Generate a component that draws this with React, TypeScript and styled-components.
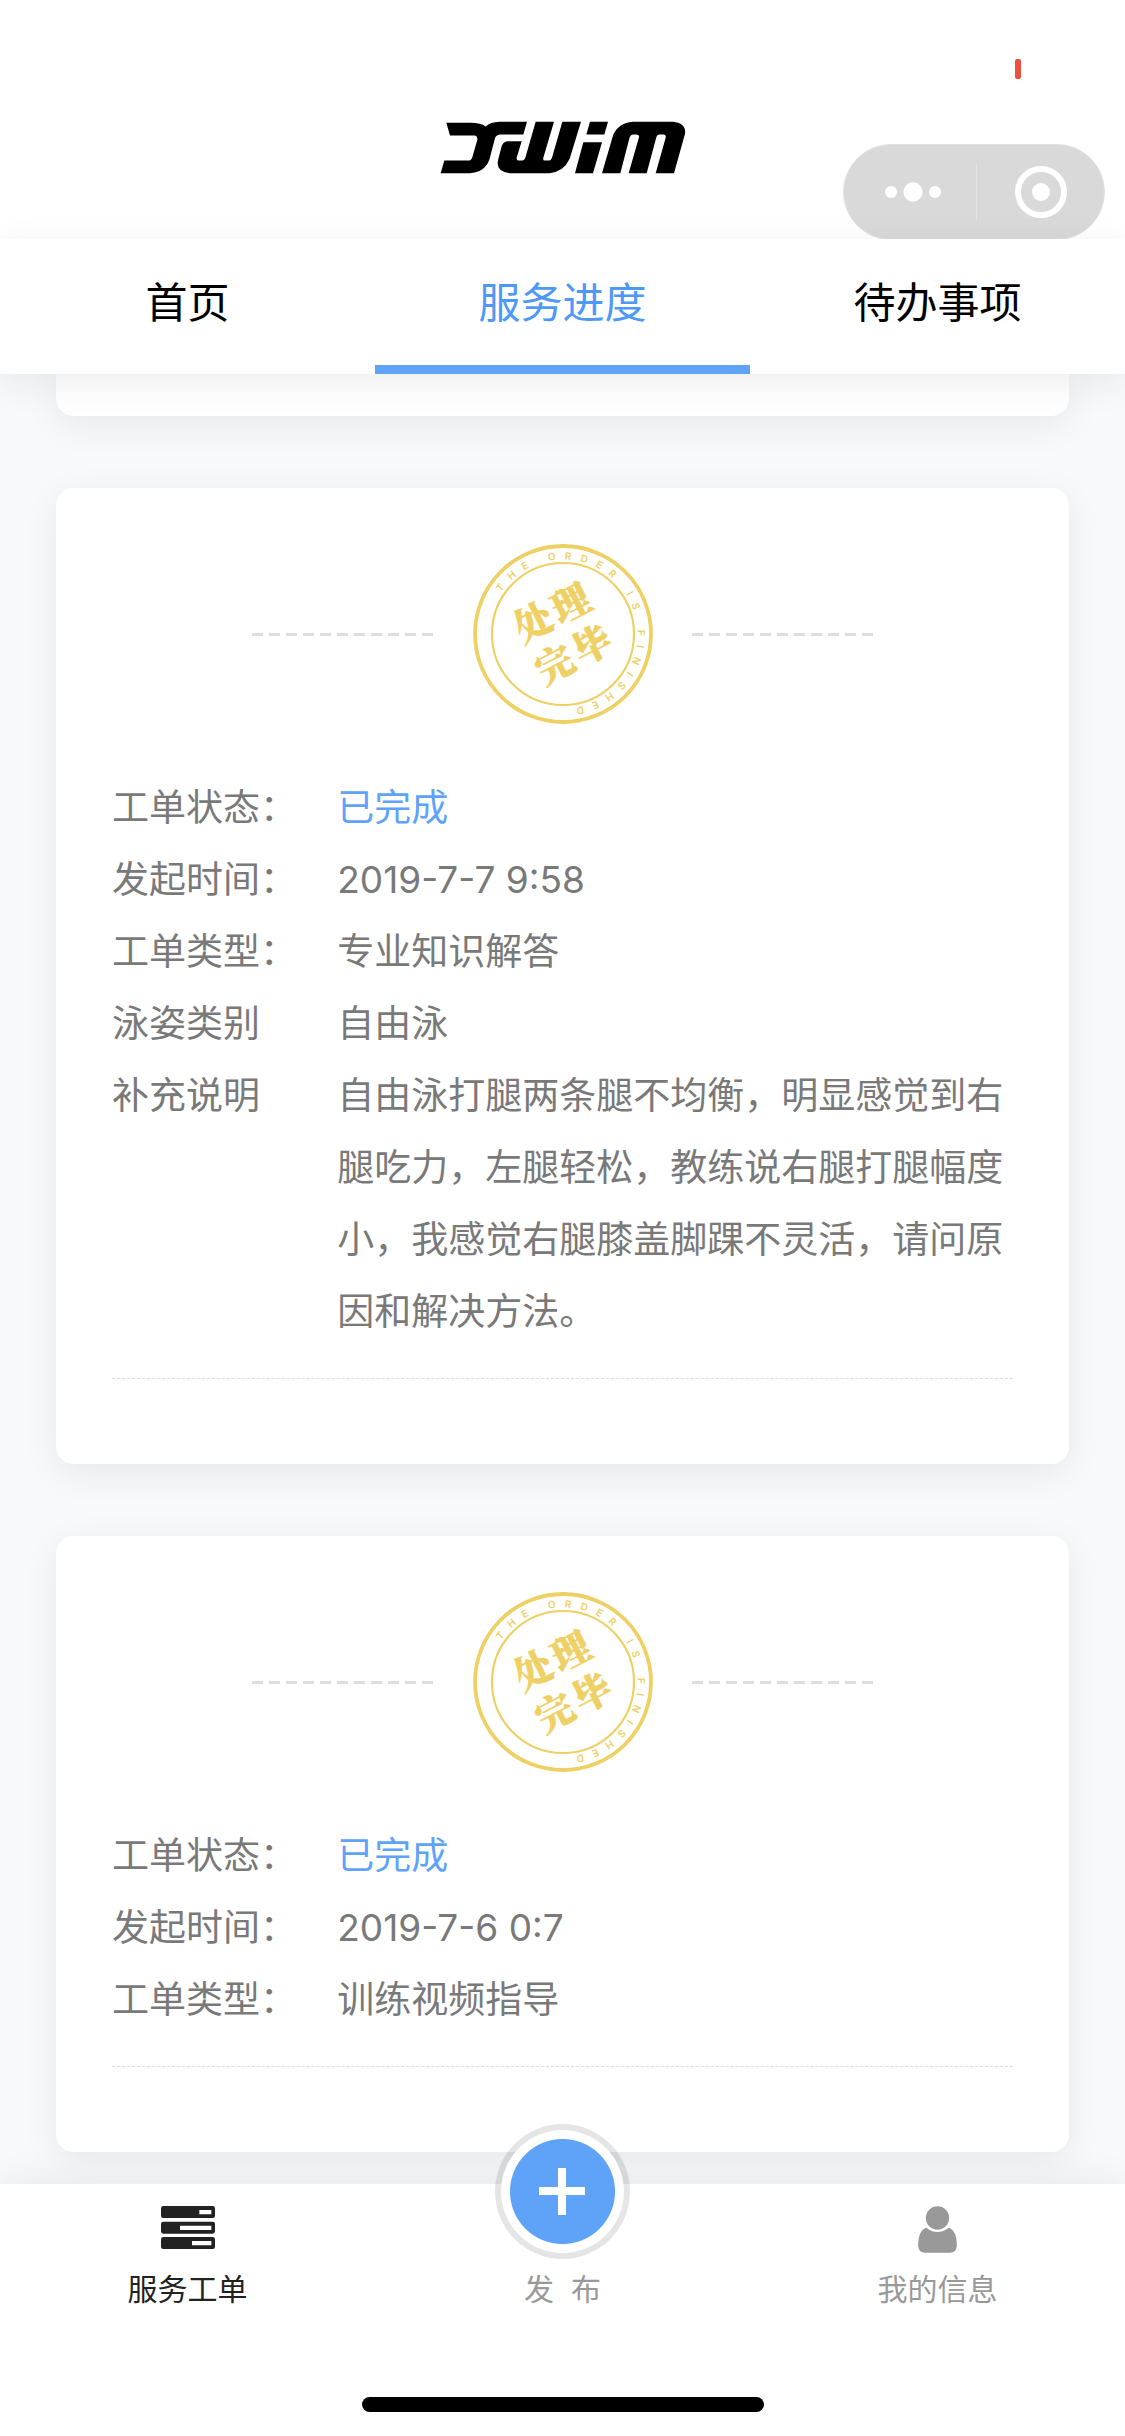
import React, { useState } from "react";
import styled, { createGlobalStyle } from "styled-components";

const blue = "#5fa3f8";
const gold = "#efd064";
const softShadow = "0 9px 36px rgba(0, 0, 0, 0.07)";

const GlobalStyle = createGlobalStyle`
  * { box-sizing: border-box; }
  body {
    margin: 0;
    background: #f7f9fb;
    font-family: Inter, "Noto Sans CJK SC", sans-serif;
  }
  button {
    margin: 0;
    padding: 0;
    border: 0;
    background: none;
    font: inherit;
    color: inherit;
    cursor: pointer;
  }
`;

const Page = styled.div`
  display: flex;
  flex-direction: column;
  min-height: 100vh;
`;

const Header = styled.header`
  background: #fff;
`;

const StatusBar = styled.div`
  display: flex;
  justify-content: flex-end;
  height: 121px;
  padding: 59px 104px 0 0;
`;

const BatteryLevel = styled.span`
  width: 6px;
  height: 20px;
  border-radius: 2px;
  background: #ee4f3f;
`;

const TitleBar = styled.div`
  display: grid;
  grid-template-columns: 1fr auto 1fr;
  height: 118px;
`;

const Brand = styled.h1`
  grid-column: 2;
  margin: 0;
  line-height: 0;
`;

const Capsule = styled.div`
  display: flex;
  justify-self: end;
  align-items: center;
  width: 262px;
  height: 96px;
  margin: 23px 20px 0 0;
  border: 1px solid #e2e2e2;
  border-radius: 48px;
  background: #d9d9d9;
`;

const CapsuleButton = styled.button`
  display: flex;
  flex: 1;
  align-items: center;
  justify-content: center;
  height: 56px;
  padding-left: 6px;

  & + & {
    padding-left: 2px;
    border-left: 1px solid #e4e4e4;
  }
`;

const Tabs = styled.nav`
  position: relative;
  z-index: 1;
  display: grid;
  grid-template-columns: repeat(3, 1fr);
  background: #fff;
  box-shadow: ${softShadow};
`;

const Tab = styled.button<{ $active: boolean }>`
  height: 135px;
  padding-top: 2px;
  border-bottom: 9px solid ${(p) => (p.$active ? blue : "transparent")};
  font-size: 42px;
  line-height: 60px;
  color: ${(p) => (p.$active ? "#4e98f8" : "#000")};
`;

const Orders = styled.main`
  display: flex;
  flex: 1;
  flex-direction: column;
  gap: 72px;
  padding: 0 56px 31px;
`;

const Card = styled.article`
  padding: 56px 56px 85px;
  border-radius: 18px;
  background: #fff;
  box-shadow: ${softShadow};
`;

const CardEnd = styled.div`
  height: 42px;
  border-radius: 0 0 18px 18px;
  background: #fff;
  box-shadow: ${softShadow};
`;

const StampRow = styled.div`
  display: flex;
  align-items: center;
  justify-content: center;
  gap: 39px;
  margin-bottom: 48px;
`;

const Dashes = styled.span`
  width: 182px;
  height: 3px;
  background: repeating-linear-gradient(90deg, #ddd 0 11px, transparent 11px 17px);
`;

const StampArt = styled.svg`
  display: block;
  width: 180px;
  height: 180px;
`;

const Details = styled.dl`
  display: grid;
  grid-template-columns: 25% 75%;
  margin: 0;
  padding-bottom: 30px;
  border-bottom: 1px dashed #ddd;
  font-size: 37px;
  line-height: 72px;
  color: #797979;
`;

const Term = styled.dt`
  margin: 0;
`;

const Value = styled.dd<{ $done?: boolean }>`
  margin: 0;
  color: ${(p) => (p.$done ? blue : "inherit")};
`;

const Footer = styled.footer`
  position: relative;
  z-index: 1;
  padding: 22px 0 24px;
  background: #fff;
  box-shadow: 0 0 36px rgba(0, 0, 0, 0.08);
`;

const FooterNav = styled.nav`
  display: grid;
  grid-template-columns: repeat(3, 1fr);
  align-items: end;
`;

const FooterItem = styled.button<{ $active?: boolean }>`
  display: flex;
  flex-direction: column;
  align-items: center;
  gap: 12px;
  font-size: 30px;
  line-height: 36px;
  white-space: pre;
  color: ${(p) => (p.$active ? "#222" : "#999")};
`;

const IconBox = styled.span`
  display: flex;
  align-items: flex-start;
  height: 53px;
`;

const PublishDisc = styled.span`
  display: flex;
  align-items: center;
  justify-content: center;
  width: 135px;
  height: 135px;
  margin-top: -82px;
  border: 6px solid rgba(0, 0, 0, 0.1);
  border-radius: 50%;
  background: radial-gradient(circle, ${blue} 52px, #fff 53px) padding-box;
`;

const HomeIndicator = styled.div`
  width: 402px;
  height: 15px;
  margin: 90px auto 0;
  border-radius: 8px;
  background: #000;
`;

function Logo() {
  return (
    <svg width="247" height="53" viewBox="58 62 741 158" role="img" aria-label="xwim">
      <path d="M80 67H152Q184 67 198 78Q212 65 240 64H322L311 102H243Q230 102 226 113L209 178Q195 216 150 218H63L74 180H145Q155 180 158 170L173 118Q174 106 164 105H91Z" />
      <path d="M264 122H306L291 172Q290 180 296 180H308Q314 180 317 172L348 64H403L371 172Q369 180 375 180H388Q394 180 397 172L428 64H484L450 175Q432 214 390 218H270Q228 214 235 180L245 140Q249 123 264 122Z" />
      <path d="M511 64H565L554 102H500ZM491 125H547L520 218H466Z" />
      <path d="M547 218L580 105Q595 68 640 64H760Q800 68 796 100L763 218H708L738 112Q740 102 732 102H718Q712 102 710 110L681 218H627L658 110Q660 102 650 102H640Q633 102 630 110L602 218Z" />
    </svg>
  );
}

function MoreIcon() {
  return (
    <svg width="56" height="20" viewBox="0 0 56 20" fill="#fff" aria-hidden="true">
      <circle cx="6" cy="10" r="6" />
      <circle cx="28" cy="10" r="9.7" />
      <circle cx="50" cy="10" r="6" />
    </svg>
  );
}

function CloseIcon() {
  return (
    <svg width="52" height="52" viewBox="0 0 52 52" fill="none" aria-hidden="true">
      <circle cx="26" cy="26" r="23" stroke="#fff" strokeWidth="6" />
      <circle cx="26" cy="26" r="9" fill="#fff" />
    </svg>
  );
}

function Stamp({ id }: { id: string }) {
  return (
    <StampArt viewBox="-90 -90 180 180" fill={gold}>
      <circle r="88" fill="none" stroke={gold} strokeWidth="3.8" />
      <circle r="71" fill="none" stroke={gold} strokeWidth="2.2" />
      <path id={id} d="M-74.5 0A74.5 74.5 0 0 1 74.5 0A74.5 74.5 0 0 1 -74.5 0" fill="none" />
      <text fontSize="10" fontFamily="Inter, sans-serif" fontWeight="600" letterSpacing="8.8">
        <textPath href={`#${id}`} startOffset="44">
          THE ORDER IS FINISHED
        </textPath>
      </text>
      <g
        transform="rotate(-27)"
        fontFamily='"Noto Serif CJK SC", "Noto Sans CJK SC", serif'
        fontSize="38"
        fontWeight="900"
        textAnchor="middle"
        stroke={gold}
        strokeWidth="0.6"
      >
        <text x="-21 21" y="-10">处理</text>
        <text x="-21 21" y="37">完毕</text>
      </g>
    </StampArt>
  );
}

function OrdersIcon() {
  return (
    <svg width="54" height="43" viewBox="180 108 162 129" aria-hidden="true">
      <g fill="#222">
        <rect x="180" y="108" width="162" height="36" rx="7" />
        <rect x="180" y="155" width="162" height="36" rx="7" />
        <rect x="180" y="201" width="162" height="36" rx="7" />
      </g>
      <path fill="#fff" d="M295 120h36v13h-36zM237 167h94v13h-94zM273 213h58v13h-58z" />
    </svg>
  );
}

function PersonIcon() {
  return (
    <svg width="39" height="47" viewBox="234 108 116 141" fill="#999" aria-hidden="true">
      <circle cx="292" cy="144" r="35" />
      <path d="M259 173Q234 180 234 228Q236 248 254 248H330Q348 248 350 228Q350 180 325 173Q310 186 292 186Q274 186 259 173Z" />
    </svg>
  );
}

function PlusIcon() {
  return (
    <svg width="47" height="47" viewBox="0 0 47 47" aria-hidden="true">
      <path d="M0 23H46M23 0V47" stroke="#fff" strokeWidth="8" />
    </svg>
  );
}

type Field = { label: string; value: string; done?: boolean };

const orders: Field[][] = [
  [
    { label: "工单状态：", value: "已完成", done: true },
    { label: "发起时间：", value: "2019-7-7 9:58" },
    { label: "工单类型：", value: "专业知识解答" },
    { label: "泳姿类别", value: "自由泳" },
    {
      label: "补充说明",
      value:
        "自由泳打腿两条腿不均衡，明显感觉到右腿吃力，左腿轻松，教练说右腿打腿幅度小，我感觉右腿膝盖脚踝不灵活，请问原因和解决方法。",
    },
  ],
  [
    { label: "工单状态：", value: "已完成", done: true },
    { label: "发起时间：", value: "2019-7-6 0:7" },
    { label: "工单类型：", value: "训练视频指导" },
  ],
];

const tabs = ["首页", "服务进度", "待办事项"];

export default function App() {
  const [tab, setTab] = useState(1);
  return (
    <Page lang="zh-CN">
      <GlobalStyle />
      <Header>
        <StatusBar>
          <BatteryLevel />
        </StatusBar>
        <TitleBar>
          <Brand>
            <Logo />
          </Brand>
          <Capsule>
            <CapsuleButton aria-label="更多">
              <MoreIcon />
            </CapsuleButton>
            <CapsuleButton aria-label="关闭">
              <CloseIcon />
            </CapsuleButton>
          </Capsule>
        </TitleBar>
      </Header>
      <Tabs>
        {tabs.map((name, i) => (
          <Tab key={name} $active={i === tab} onClick={() => setTab(i)}>
            {name}
          </Tab>
        ))}
      </Tabs>
      <Orders>
        <CardEnd />
        {orders.map((fields, i) => (
          <Card key={i}>
            <StampRow>
              <Dashes />
              <Stamp id={`stamp-ring-${i}`} />
              <Dashes />
            </StampRow>
            <Details>
              {fields.map((f) => (
                <React.Fragment key={f.label}>
                  <Term>{f.label}</Term>
                  <Value $done={f.done}>{f.value}</Value>
                </React.Fragment>
              ))}
            </Details>
          </Card>
        ))}
      </Orders>
      <Footer>
        <FooterNav>
          <FooterItem $active>
            <IconBox>
              <OrdersIcon />
            </IconBox>
            服务工单
          </FooterItem>
          <FooterItem>
            <PublishDisc>
              <PlusIcon />
            </PublishDisc>
            {"发  布"}
          </FooterItem>
          <FooterItem>
            <IconBox>
              <PersonIcon />
            </IconBox>
            我的信息
          </FooterItem>
        </FooterNav>
        <HomeIndicator />
      </Footer>
    </Page>
  );
}
